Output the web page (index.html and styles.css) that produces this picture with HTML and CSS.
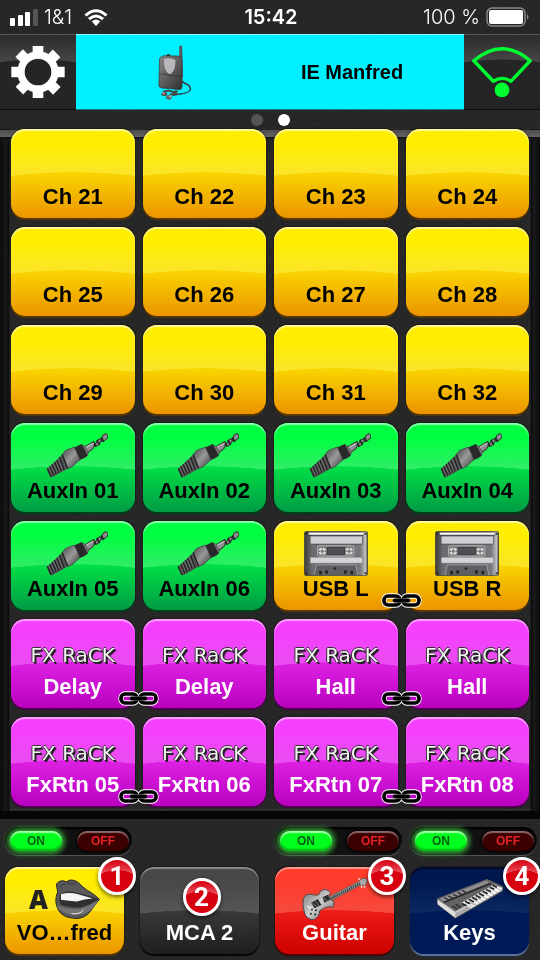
FILE: index.html
```html
<!DOCTYPE html>
<html lang="en">
<head>
    <meta charset="utf-8">
    <meta name="viewport" content="width=device-width, initial-scale=1">
    <title>Monitor mixer</title>
    <link rel="stylesheet" href="styles.css">
</head>
<body>
    <svg class="grain" aria-hidden="true">
        <filter id="noise"><feTurbulence type="fractalNoise" baseFrequency="0.5" numOctaves="2"/><feColorMatrix type="matrix" values="1 0 0 0 0  1 0 0 0 0  1 0 0 0 0  0 0 0 0 1"/></filter>
        <rect width="100%" height="100%" filter="url(#noise)"/>
    </svg>
    <svg class="defs" aria-hidden="true">
        <defs>
            <linearGradient id="metal" x1="0" y1="0" x2="1" y2="1"><stop offset="0" stop-color="#444"/><stop offset=".5" stop-color="#999"/><stop offset="1" stop-color="#333"/></linearGradient>
            <linearGradient id="shell" x1="0" y1="0" x2="1" y2="1"><stop offset="0" stop-color="#8a8a8a"/><stop offset="1" stop-color="#2e2e2e"/></linearGradient>
            <linearGradient id="case"><stop offset="0" stop-color="#3c3c3e"/><stop offset=".12" stop-color="#6c6c70"/><stop offset=".88" stop-color="#77777b"/><stop offset=".97" stop-color="#c0c0c2"/><stop offset="1" stop-color="#444"/></linearGradient>
            <linearGradient id="wood" x1="0" y1="0" x2="1" y2="1"><stop offset="0" stop-color="#777"/><stop offset=".5" stop-color="#ccc"/><stop offset="1" stop-color="#666"/></linearGradient>
        </defs>
        <symbol id="jack" viewBox="0 0 184 132">
            <path d="M112 42L142 24l5 9 6-13 8-4 3 5 5-14 8-6 7 5-2 9-12 9-7-1-5 11-9 5-4-6-6 13-18 13z" fill="#8e8e90" stroke="#38383a" stroke-width="3"/>
            <path d="M140 27l8 13M151 20l8 14M164 12l7 13" stroke="#222" stroke-width="5"/>
            <path d="M117 43L142 29" stroke="#c4c4c4" stroke-width="3"/>
            <path d="M104 34l11 4 11 20-5 10-12 8z" fill="#777" stroke="#444" stroke-width="2"/>
            <path d="M82 43l24-11 18 34-24 14-8 2z" fill="#29292b"/>
            <path d="M48 63l10-12 26-10 17 37-22 20-14 7z" fill="url(#metal)" stroke="#38383a" stroke-width="2"/>
            <path d="M2 107l4-4 42-39 18 40-46 26-8 0z" fill="#555557"/>
            <path d="M4 104l12 26M11 98l12 27M18 92l12 29M25 85l13 32M32 79l13 33M40 71l14 37M48 63l16 41" stroke="#222" stroke-width="4"/>
            <path d="M8 102l11 24M15 95l11 25M22 90l12 25M29 83l12 28M36 77l13 28" stroke="#89898b" stroke-width="1.500"/>
        </symbol>
        <symbol id="tape" viewBox="0 0 190 134">
            <rect x="1" y="1" width="188" height="132" rx="6" fill="url(#case)" stroke="#333" stroke-width="2"/>
            <path d="M14 8H176" stroke="#fff" stroke-width="6"/><path d="M12 13H178" stroke="#333" stroke-width="2"/>
            <rect x="18" y="15" width="156" height="24" rx="2" fill="#d0d0d4" stroke="#444" stroke-width="2"/>
            <rect x="18" y="78" width="156" height="18" rx="2" fill="#d4d4d6" stroke="#555"/>
            <rect x="40" y="44" width="108" height="31" rx="4" fill="#77777b" stroke="#cfcfd2" stroke-width="2"/>
            <rect x="70" y="49" width="50" height="21" fill="#505054" stroke="#303032" stroke-width="2"/>
            <circle cx="54" cy="60" r="11" fill="#ddd"/><circle cx="134" cy="60" r="11" fill="#ddd"/>
            <circle cx="54" cy="60" r="5" fill="#777"/><circle cx="134" cy="60" r="5" fill="#777"/>
            <path d="M54 49v4M54 67v4M43 60h4M61 60h4M134 49v4M134 67v4M123 60h4M141 60h4" stroke="#333" stroke-width="3"/>
            <path d="M30 132l6-31h118l6 31" fill="#606064" stroke="#b0b0b2" stroke-width="2"/>
            <g fill="#222"><circle cx="92" cy="112" r="4"/><circle cx="7" cy="8" r="3"/><circle cx="183" cy="8" r="3"/><circle cx="7" cy="126" r="3"/><circle cx="183" cy="126" r="3"/><rect x="45" y="119" width="8" height="10"/><rect x="63" y="117" width="8" height="10"/><rect x="119" y="117" width="8" height="10"/><rect x="138" y="119" width="8" height="10"/></g>
        </symbol>
        <symbol id="chain" viewBox="0 0 123 45">
            <g fill="none" stroke="#fff" stroke-width="16"><rect x="9" y="9" width="48" height="27" rx="12"/><rect x="66" y="9" width="48" height="27" rx="12"/></g>
            <g fill="none" stroke="#000" stroke-width="11"><rect x="9" y="9" width="48" height="27" rx="12"/><rect x="66" y="9" width="48" height="27" rx="12"/></g>
            <path d="M41 22.500H82" stroke="#777" stroke-width="13" stroke-linecap="round"/>
            <path d="M41 22.500H82" stroke="#000" stroke-width="11" stroke-linecap="round"/>
        </symbol>
    </svg>

    <header class="status">
        <div class="carrier">
            <svg width="28" height="17" viewBox="0 0 28 17" fill="#fff"><rect y="9" width="5" height="8" rx="1"/><rect x="8" y="6" width="5" height="11" rx="1"/><rect x="15" y="3" width="5" height="14" rx="1"/><rect x="23" width="5" height="17" rx="1" fill="#555"/></svg>
            <span>1&amp;1</span>
            <svg class="wifi" width="24" height="17" viewBox="0 0 24 17"><path d="M1.500 6.500Q12-3 22.500 6.500M5 10.200q7-6.500 14 0" fill="none" stroke="#fff" stroke-width="3"/><path d="M7.800 12.500q4.200-4 8.400 0L12 17z" fill="#fff"/></svg>
        </div>
        <time class="clock">15:42</time>
        <div class="battery">
            <span>100 %</span>
            <svg width="44" height="20" viewBox="0 0 44 20"><rect x="1" y="1" width="38" height="18" rx="5" fill="none" stroke="#888" stroke-width="1.500"/><rect x="3" y="3" width="34" height="14" rx="2" fill="#fff"/><path d="M41 7q3 3 0 6z" fill="#888"/></svg>
        </div>
    </header>

    <nav class="topbar">
        <button class="tool" aria-label="Settings">
            <svg width="54" height="52" viewBox="0 0 160 156" fill="#fff">
                <circle cx="80" cy="78" r="51" fill="none" stroke="#fff" stroke-width="22"/>
                <g id="teeth"><path d="M64-1h32v24H64zM64 133h32v24H64z"/><path d="M0 62h24v32H0zM136 62h24v32h-24z"/></g>
                <use href="#teeth" transform="rotate(45 80 78)"/>
            </svg>
        </button>
        <button class="bus">
            <span class="bus-icon">
                <svg width="34" height="55" viewBox="0 0 100 164">
                    <path d="M68 104q6 10 20 14 12 8 6 18-8 8-28 10l-22 4" fill="none" stroke="#333" stroke-width="4"/>
                    <path d="M63 4q4-5 8 0l3 94H62z" fill="#4b4b50"/><path d="M65 6v88" stroke="#777" stroke-width="2"/>
                    <path d="M24 30q6-6 12 0v8H24z" fill="#333"/>
                    <path d="M4 40q4-6 12-8l44 1q10 2 11 12v80q-1 8-9 8l-52-5q-8-1-8-8z" fill="url(#shell)" stroke="#333" stroke-width="2"/>
                    <path d="M17 42q17-6 34 2 2 30-12 41-5 3-10-1Q16 72 17 42z" fill="#b8b8bc"/>
                    <path d="M3 86l66 8" stroke="#333" stroke-width="2"/>
                    <path d="M14 140l16-4 14 4 14-2M24 158l14-10 18-4" stroke="#444" stroke-width="6" fill="none"/>
                    <ellipse cx="18" cy="146" rx="9" ry="6" fill="#555"/><ellipse cx="32" cy="156" rx="8" ry="7" fill="#666"/><circle cx="16" cy="144" r="3" fill="#bbb"/><circle cx="35" cy="153" r="3" fill="#bbb"/>
                </svg>
            </span>
            <span class="bus-name">IE Manfred</span>
        </button>
        <button class="tool" aria-label="Connection">
            <svg width="60" height="52" viewBox="0 0 178 155"><path d="M5 44Q89-28 173 44L116 105Q89 88 63 105z" fill="none" stroke="#00ff30" stroke-width="10" stroke-linejoin="round"/><circle cx="89" cy="131" r="22" fill="#00ff30"/></svg>
        </button>
    </nav>
    <div class="pages"><i class="dot"></i><i class="dot active"></i></div>

    <main class="tray">
        <button class="tile yellow"><span class="name">Ch 21</span></button>
        <button class="tile yellow"><span class="name">Ch 22</span></button>
        <button class="tile yellow"><span class="name">Ch 23</span></button>
        <button class="tile yellow"><span class="name">Ch 24</span></button>
        <button class="tile yellow"><span class="name">Ch 25</span></button>
        <button class="tile yellow"><span class="name">Ch 26</span></button>
        <button class="tile yellow"><span class="name">Ch 27</span></button>
        <button class="tile yellow"><span class="name">Ch 28</span></button>
        <button class="tile yellow"><span class="name">Ch 29</span></button>
        <button class="tile yellow"><span class="name">Ch 30</span></button>
        <button class="tile yellow"><span class="name">Ch 31</span></button>
        <button class="tile yellow"><span class="name">Ch 32</span></button>

        <button class="tile green"><svg class="icon jack"><use href="#jack"/></svg><span class="name">AuxIn 01</span></button>
        <button class="tile green"><svg class="icon jack"><use href="#jack"/></svg><span class="name">AuxIn 02</span></button>
        <button class="tile green"><svg class="icon jack"><use href="#jack"/></svg><span class="name">AuxIn 03</span></button>
        <button class="tile green"><svg class="icon jack"><use href="#jack"/></svg><span class="name">AuxIn 04</span></button>
        <button class="tile green"><svg class="icon jack"><use href="#jack"/></svg><span class="name">AuxIn 05</span></button>
        <button class="tile green"><svg class="icon jack"><use href="#jack"/></svg><span class="name">AuxIn 06</span></button>
        <button class="tile yellow"><svg class="icon"><use href="#tape"/></svg><span class="name">USB L</span><svg class="link"><use href="#chain"/></svg></button>
        <button class="tile yellow"><svg class="icon"><use href="#tape"/></svg><span class="name">USB R</span></button>

        <button class="tile pink"><span class="fx">FX RaCK</span><span class="name">Delay</span><svg class="link"><use href="#chain"/></svg></button>
        <button class="tile pink"><span class="fx">FX RaCK</span><span class="name">Delay</span></button>
        <button class="tile pink"><span class="fx">FX RaCK</span><span class="name">Hall</span><svg class="link"><use href="#chain"/></svg></button>
        <button class="tile pink"><span class="fx">FX RaCK</span><span class="name">Hall</span></button>
        <button class="tile pink"><span class="fx">FX RaCK</span><span class="name">FxRtn 05</span><svg class="link"><use href="#chain"/></svg></button>
        <button class="tile pink"><span class="fx">FX RaCK</span><span class="name">FxRtn 06</span></button>
        <button class="tile pink"><span class="fx">FX RaCK</span><span class="name">FxRtn 07</span><svg class="link"><use href="#chain"/></svg></button>
        <button class="tile pink"><span class="fx">FX RaCK</span><span class="name">FxRtn 08</span></button>
    </main>

    <footer class="groups">
        <div class="group">
            <div class="switch"><button class="on">ON</button><button class="off">OFF</button></div>
            <button class="tile small yellow">
                <span class="icons"><b class="letter">A</b>
                    <svg width="45" height="41" viewBox="0 0 136 122">
                        <path d="M4 14Q18-2 34 8 48-4 68 8 82 22 98 34q14 6 36 26-14 18-28 38-18 22-46 20-38-2-50-26Q-4 68 8 38z" fill="#59595b" stroke="#242426" stroke-width="3"/>
                        <path d="M14 44q24-12 52-4 28 6 66 20-24 16-52 25-36 2-64-9-4-12-2-32z" fill="#303032"/>
                        <path d="M18 44q28-6 52 1l44 13q-26 2-48 9-24-2-48-5z" fill="#f4f4f4"/>
                        <path d="M6 80q42 16 78 6 26-8 46-23-18 42-66 44-34 0-54-19z" fill="#747476"/>
                        <path d="M50 104q24 3 36-11" fill="none" stroke="#eee" stroke-width="3"/><path d="M36 10q10 9 26 2M14 24q8-12 18-9" fill="none" stroke="#38383a" stroke-width="3"/>
                    </svg>
                </span>
                <span class="name">VO…fred</span><span class="badge">1</span>
            </button>
        </div>
        <div class="group">
            <button class="tile small gray"><span class="name">MCA 2</span><span class="badge center">2</span></button>
        </div>
        <div class="group">
            <div class="switch"><button class="on">ON</button><button class="off">OFF</button></div>
            <button class="tile small red">
                <span class="icons">
                    <svg width="66" height="42" viewBox="0 0 200 126">
                        <path d="M80 57L172 10l8-8 14-2 4 8-5 13-18 1L84 70z" fill="#aaa" stroke="#444" stroke-width="2"/>
                        <path d="M84 63L176 15" stroke="#3c3c3c" stroke-width="7"/><path d="M84 63L176 15" stroke="#ccc" stroke-width="5" stroke-dasharray="2 5"/>
                        <path d="M174 5l-3-6M182 0l-3-7M190-1V-6M179 22l3 8M188 22l3 7" stroke="#ddd" stroke-width="4"/>
                        <path d="M4 62q8-18 28-12 16 4 20-2 4-14 20-14 8 2 14 10-10 10 0 20l12 8-4 16-12-2q-18 4-28 12-2 22-20 28-20-2-26-20Q0 84 4 62z" fill="url(#wood)" stroke="#4a4a4a" stroke-width="3"/>
                        <path d="M28 74l20-11 11 18-21 10zM62 58l16-8 7 15-17 9z" fill="#2a2a2a"/><path d="M31 76l17 12M64 59l14 11M40 70l12 14" stroke="#aaa" stroke-width="2"/>
                        <g fill="#222"><circle cx="30" cy="95" r="3"/><circle cx="42" cy="97" r="3"/><circle cx="27" cy="108" r="3"/><circle cx="40" cy="110" r="3"/></g>
                        <path d="M16 84l13 8" stroke="#eee" stroke-width="4"/>
                    </svg>
                </span>
                <span class="name">Guitar</span><span class="badge">3</span>
            </button>
        </div>
        <div class="group">
            <div class="switch"><button class="on">ON</button><button class="off">OFF</button></div>
            <button class="tile small navy">
                <span class="icons">
                    <svg width="68" height="42" viewBox="0 0 202 126">
                        <path d="M3 62L152 4l48 22-1 13L57 121 4 79z" fill="#aaa" stroke="#444" stroke-width="2"/>
                        <path d="M3 62L152 4l47 21L56 100z" fill="#636365"/>
                        <path d="M10 62L150 8l10 5L22 70z" fill="#919193"/>
                        <path d="M72 76L173 19l25 10-1 8-94 55z" fill="#f8f8f8" stroke="#333"/>
                        <path d="M80 82l24-11M86 87l23-12M97 88l21-12M90 66l32 17M101 60l32 17M112 54l32 17M123 48l32 17M134 42l31 16M145 36l31 15M156 30l30 15M166 24l28 13" stroke="#777" stroke-width="1.500"/>
                        <path d="M76 76l16 8M86 70l16 8M97 64l16 8M107 58l16 8M118 52l15 8M128 46l15 8M139 40l15 7M149 34l15 7M160 28l14 6M169 22l13 6" stroke="#222" stroke-width="5"/>
                        <path d="M22 74L164 16" stroke="#222" stroke-width="4"/><path d="M23 59l15 7M36 54l14 7M50 49l13 6M64 43l12 6M78 38l11 5M48 84l15 10M58 79l15 10" stroke="#303032" stroke-width="4"/>
                        <path d="M3 65L57 103v16L4 79z" fill="#ddd"/><path d="M57 104L104 77" stroke="#ddd" stroke-width="3"/>
                    </svg>
                </span>
                <span class="name">Keys</span><span class="badge">4</span>
            </button>
        </div>
    </footer>
</body>
</html>
```

FILE: styles.css
```css
* {
    box-sizing: border-box;
}

html {
    background-color: #1b1b1b;
}

body {
    margin: 0;
    min-height: 100vh;
    display: flex;
    flex-direction: column;
    overflow-x: hidden;
    color: #fff;
    font-family: "Liberation Sans", Arial, sans-serif;
}

button {
    margin: 0;
    padding: 0;
    border: none;
    color: inherit;
    font-family: inherit;
    cursor: pointer;
}

svg {
    display: block;
}

.grain {
    position: fixed;
    top: 0;
    left: 0;
    width: 100%;
    height: 100%;
    z-index: -1;
    opacity: 0.08;
}

.defs {
    position: absolute;
    width: 0;
    height: 0;
}

/* status bar */
.status {
    display: grid;
    grid-template-columns: 1fr auto 1fr;
    align-items: center;
    height: 34px;
    padding: 0 10px;
    font-family: Inter, sans-serif;
    font-size: 20px;
    font-weight: 300;
}

.carrier,
.battery {
    display: flex;
    align-items: center;
    gap: 6px;
}

.battery {
    justify-content: flex-end;
}

.wifi {
    margin-left: 6px;
}

.clock {
    font-size: 20px;
    font-weight: 600;
    padding-left: 2px;
}

/* selected bus */
.topbar {
    display: flex;
    height: 76px;
}

.tool {
    display: flex;
    align-items: center;
    justify-content: center;
    width: 76px;
    border-top: 1px solid #555;
    border-bottom: 1px solid #0c0c0c;
    background: radial-gradient(ellipse 130px 60px at 50% 84px, #252525 98%, transparent 100%), linear-gradient(#2b2b2b, #4a4a4a 40%);
}

.bus {
    flex: 1;
    display: grid;
    grid-template-columns: 1fr 1fr;
    align-items: center;
    border-top: 1px solid #8ff8ff;
    border-bottom: 1px solid #087b83;
    background-color: #00f0ff;
    color: #000;
    font-size: 20px;
    font-weight: bold;
}

.bus-icon {
    display: flex;
    justify-content: center;
    padding-left: 4px;
}

.bus-name {
    padding-right: 30px;
}

.pages {
    display: flex;
    justify-content: center;
    align-items: center;
    gap: 15px;
    height: 19px;
}

.dot {
    width: 12px;
    height: 12px;
    border-radius: 50%;
    background-color: #555;
}

.dot.active {
    background-color: #fff;
}

/* channels */
.tray {
    display: grid;
    grid-template-columns: repeat(4, 1fr);
    gap: 9px 8px;
    padding: 0 11px 5px;
    border-bottom: 8px solid #060606;
    background:
        linear-gradient(transparent 1px, #4c4c4c 1px, #626262 8px, #111 8px, transparent 11px) 0 0 / 100% 12px no-repeat,
        linear-gradient(90deg, #0c0c0c, #1b1b1b 7px, #050505 8px, transparent 10px) 0 0 / 10px 100% no-repeat,
        linear-gradient(270deg, #0c0c0c, #1b1b1b 7px, #050505 8px, transparent 10px) 100% 0 / 10px 100% no-repeat,
        linear-gradient(#3a3a3a, #222) 0 100% / 100% 2px no-repeat;
}

.tile {
    position: relative;
    display: flex;
    flex-direction: column;
    align-items: center;
    justify-content: flex-end;
    height: 89px;
    padding-bottom: 8px;
    border-radius: 14px;
    background: linear-gradient(var(--low) 45%, var(--end));
    box-shadow: 0 2px 1px var(--edge), 0 0 2px #000;
    font-size: 22px;
    line-height: 26px;
    font-weight: bold;
}

/* curved gloss on the upper half */
.tile::before {
    content: "";
    position: absolute;
    top: 0;
    left: 0;
    width: 100%;
    height: 47px;
    border-radius: 14px 14px 0 0;
    background: linear-gradient(var(--top) 30%, var(--mid));
    box-shadow: inset 0 2px 1px var(--shine);
    -webkit-mask-image: radial-gradient(ellipse 180px 57px at 50% 100px, transparent 99%, #000 100%);
    mask-image: radial-gradient(ellipse 180px 57px at 50% 100px, transparent 99%, #000 100%);
}

.yellow {
    --top: #ffee00;
    --mid: #fbe42b;
    --low: #fada00;
    --end: #ec9400;
    --edge: #5a3900;
    --shine: #fff8a0;
    color: #000;
}

.green {
    --top: #00ff40;
    --mid: #31ec69;
    --low: #00e645;
    --end: #009b45;
    --edge: #00421b;
    --shine: #8fffae;
    color: #000;
}

.pink {
    --top: #f540ff;
    --mid: #e94df0;
    --low: #e024e6;
    --end: #b900bf;
    --edge: #4c004f;
    --shine: #fca8ff;
}

.gray {
    --top: #484848;
    --mid: #565656;
    --low: #3c3c3c;
    --end: #1e1e1e;
    --edge: #050505;
    --shine: #8a8a8a;
}

.red {
    --top: #ff3b2b;
    --mid: #f54a40;
    --low: #f01f1b;
    --end: #cc0000;
    --edge: #4b0000;
    --shine: #ff9b90;
}

.navy {
    --top: #00174f;
    --mid: #0c2a63;
    --low: #001a58;
    --end: #001a58;
    --edge: #5b75a5;
    --shine: #000a28;
}

.name,
.icon,
.icons,
.fx {
    position: relative;
}

.icon {
    width: 64px;
    height: 45px;
}

.jack {
    width: 62px;
    margin-left: 8px;
}

.fx {
    margin-bottom: 7px;
    color: #f4f4f4;
    font-family: "DejaVu Sans", sans-serif;
    font-size: 20px;
    line-height: 24px;
    font-weight: normal;
    text-shadow: 2px 2px 0 #222, 1px 1px 0 #222, -1px 0 0 #333, 0 -1px 0 #333;
}

.link {
    position: absolute;
    right: -24px;
    bottom: 2px;
    width: 41px;
    height: 15px;
    z-index: 1;
}

/* mute groups */
.groups {
    display: grid;
    grid-template-columns: repeat(4, 1fr);
    padding: 8px 0 7px;
}

.group {
    display: flex;
    flex-direction: column;
    justify-content: flex-end;
    gap: 12px;
    padding: 0 3px 0 5px;
}

.switch {
    display: flex;
    align-items: center;
    justify-content: space-between;
    height: 28px;
    padding: 0 3px 0 5px;
    border-radius: 14px;
    background-color: #111;
    box-shadow: inset 0 2px 2px #000, 0 1px 0 #555;
}

.switch button {
    width: 52px;
    height: 20px;
    border-radius: 10px;
    font-size: 12px;
    font-weight: bold;
}

.on {
    background-color: #00ff1e;
    box-shadow: 0 0 5px 3px #359b35, inset 0 2px 1px #a0ffa8, inset 0 -2px 2px #00b914;
    color: #045d10;
}

.off {
    background-color: #3b0000;
    box-shadow: inset 0 2px 1px #8d6767, 0 0 2px 1px #000;
    color: #e42222;
}

.small {
    height: 87px;
    margin-right: 8px;
}

.icons {
    display: flex;
    align-items: center;
    justify-content: center;
    gap: 7px;
    height: 42px;
}

.letter {
    color: #222;
    font-family: "Open Sans", sans-serif;
    font-size: 26px;
    font-weight: 800;
}

.badge {
    position: absolute;
    top: -10px;
    right: -12px;
    width: 38px;
    height: 38px;
    border: 3px solid #fff;
    border-radius: 50%;
    background: radial-gradient(ellipse 26px 18px at 50% 28px, #d6000f 98%, transparent 100%), linear-gradient(#d6000f, #ef7780 60%);
    box-shadow: 0 2px 4px rgba(0, 0, 0, 0.6);
    color: #fff;
    font-family: Roboto, sans-serif;
    font-size: 26px;
    line-height: 32px;
    text-align: center;
}

.badge.center {
    top: 11px;
    right: auto;
    left: calc(50% - 17px);
}
```
